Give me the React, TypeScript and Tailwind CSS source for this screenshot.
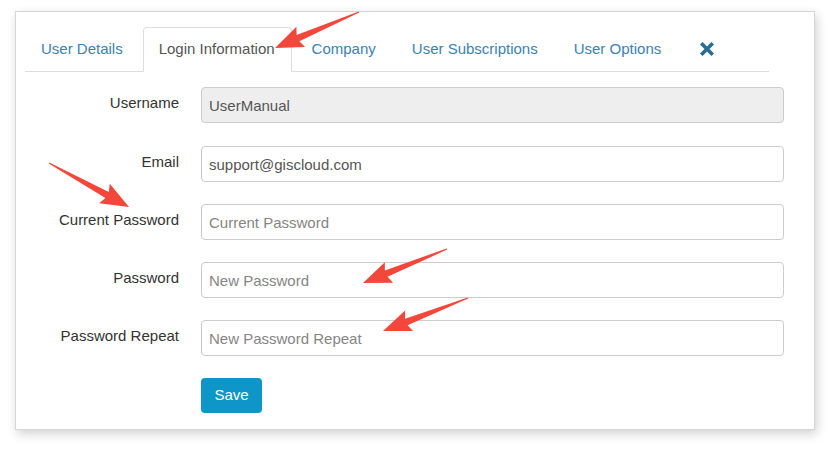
import React from "react";

const tabs = ["User Details", "Login Information", "Company", "User Subscriptions", "User Options"];

const fields = [
  { label: "Username", value: "UserManual", disabled: true },
  { label: "Email", value: "support@giscloud.com" },
  { label: "Current Password", placeholder: "Current Password" },
  { label: "Password", placeholder: "New Password" },
  { label: "Password Repeat", placeholder: "New Password Repeat" },
];

// red annotation arrows: tail -> tip
const arrows = [
  { tail: [359, 12], tip: [275, 48] },
  { tail: [49, 163], tip: [129, 207] },
  { tail: [447, 249], tip: [363, 283] },
  { tail: [468, 298], tip: [383, 331] },
];

function arrowPoints(tail: number[], tip: number[]) {
  const dx = tip[0] - tail[0];
  const dy = tip[1] - tail[1];
  const len = Math.hypot(dx, dy);
  const ux = dx / len;
  const uy = dy / len;
  const nx = -uy;
  const ny = ux;
  const headLen = 25;
  const headHalf = 11;
  const bx = tip[0] - ux * headLen;
  const by = tip[1] - uy * headLen;
  const neck = 3.5;
  const pts = [
    [tail[0] + nx * 0.6, tail[1] + ny * 0.6],
    [bx + nx * neck, by + ny * neck],
    [bx + nx * headHalf - ux * 3, by + ny * headHalf - uy * 3],
    [tip[0], tip[1]],
    [bx - nx * headHalf - ux * 3, by - ny * headHalf - uy * 3],
    [bx - nx * neck, by - ny * neck],
    [tail[0] - nx * 0.6, tail[1] - ny * 0.6],
  ];
  return pts.map((p) => p.join(",")).join(" ");
}

export default function App() {
  return (
    <div className="relative w-[830px] h-[450px] bg-white overflow-hidden font-['Liberation_Sans',Arial,sans-serif]">
      <div className="ml-[15px] mt-[11px] w-[800px] h-[419px] border border-[#d6d6d6] bg-white shadow-[2px_4px_10px_rgba(0,0,0,0.18)]">
        <div className="ml-[9px] mt-[15px] w-[744px] flex items-end border-b border-[#dddddd] h-[45px]">
          {tabs.map((t) => {
            const active = t === "Login Information";
            return (
              <div
                key={t}
                className={
                  active
                    ? "h-[45px] -mb-px pl-[15px] pr-[16px] mr-1 flex items-center text-[15px] text-[#555555] bg-white border border-[#dddddd] border-b-white rounded-t-[4px]"
                    : "h-[44px] px-[15px] mr-1 flex items-center text-[15px] text-[#3a82b5] border border-transparent"
                }
              >
                {t}
              </div>
            );
          })}
          <div className="h-[44px] pl-[19px] flex items-center">
            <svg width="14" height="14" viewBox="0 0 14 14">
              <path d="M2.5 2.5 L11.5 11.5 M11.5 2.5 L2.5 11.5" stroke="#276d97" strokeWidth="3.6" strokeLinecap="square" />
            </svg>
          </div>
        </div>

        <div className="mt-[15px] flex flex-col">
          {fields.map((f, i) => (
            <div key={f.label} className={"flex items-start " + (i === 0 ? "mb-[23px]" : "mb-[22px]")}>
              <div className="w-[163px] pt-[6px] text-right text-[15px] leading-[20px] text-[#333333]">{f.label}</div>
              <input
                readOnly
                disabled={f.disabled}
                defaultValue={f.value}
                placeholder={f.placeholder}
                className={
                  "ml-[22px] w-[583px] h-[36px] px-[7px] rounded-[4px] border border-[#cccccc] text-[15px] text-[#555555] placeholder:text-[#858585] outline-none " +
                  (f.disabled ? "bg-[#eeeeee]" : "bg-white")
                }
              />
            </div>
          ))}
          <div className="flex">
            <button className="ml-[185px] w-[61px] h-[35px] rounded-[4px] bg-[#0e96c8] text-white text-[15px]">Save</button>
          </div>
        </div>
      </div>

      <svg className="absolute inset-0 pointer-events-none" width="830" height="450">
        {arrows.map((a, i) => (
          <polygon key={i} points={arrowPoints(a.tail, a.tip)} fill="#f4473b" />
        ))}
      </svg>
    </div>
  );
}
